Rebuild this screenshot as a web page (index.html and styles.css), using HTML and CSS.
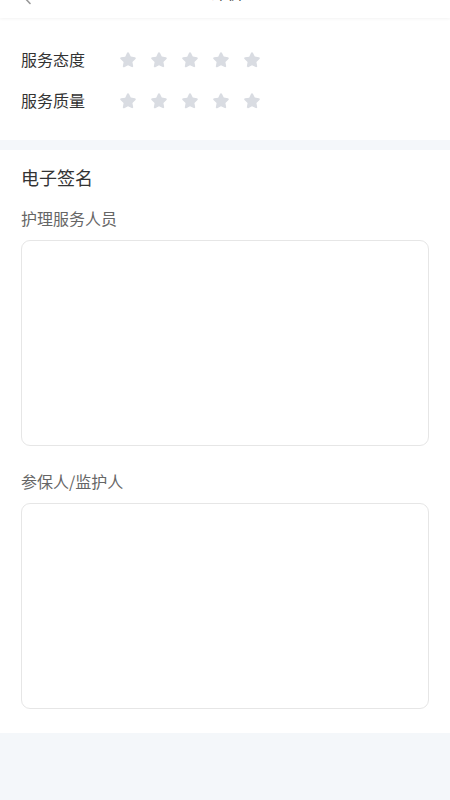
FILE: index.html
```html
<!DOCTYPE html>
<html lang="zh">
<head>
<meta charset="utf-8">
<title>评价</title>
<link rel="stylesheet" href="styles.css">
</head>
<body>
<div class="page">
  <header class="nav">
    <span class="back">
      <svg width="10" height="16" viewBox="0 0 10 16"><path d="M8 1.5 L2 8 L8 14.5" fill="none" stroke="#999" stroke-width="1.6" stroke-linecap="round" stroke-linejoin="round"/></svg>
    </span>
    <span class="title">评价</span>
  </header>

  <section class="card rate-card">
    <div class="rate-row">
      <span class="rate-label">服务态度</span>
      <div class="stars">
        <svg class="star" viewBox="0 0 24 24"><path d="M12 2.6c.5 0 .9.3 1.1.7l2.2 4.6 5 .7c1 .1 1.4 1.4.7 2.1l-3.7 3.6.9 5c.2 1-.9 1.7-1.7 1.2L12 18.2l-4.5 2.4c-.9.5-1.9-.3-1.7-1.2l.9-5-3.7-3.6c-.7-.7-.3-2 .7-2.1l5-.7 2.2-4.6c.2-.4.6-.7 1.1-.7z"/></svg>
        <svg class="star" viewBox="0 0 24 24"><path d="M12 2.6c.5 0 .9.3 1.1.7l2.2 4.6 5 .7c1 .1 1.4 1.4.7 2.1l-3.7 3.6.9 5c.2 1-.9 1.7-1.7 1.2L12 18.2l-4.5 2.4c-.9.5-1.9-.3-1.7-1.2l.9-5-3.7-3.6c-.7-.7-.3-2 .7-2.1l5-.7 2.2-4.6c.2-.4.6-.7 1.1-.7z"/></svg>
        <svg class="star" viewBox="0 0 24 24"><path d="M12 2.6c.5 0 .9.3 1.1.7l2.2 4.6 5 .7c1 .1 1.4 1.4.7 2.1l-3.7 3.6.9 5c.2 1-.9 1.7-1.7 1.2L12 18.2l-4.5 2.4c-.9.5-1.9-.3-1.7-1.2l.9-5-3.7-3.6c-.7-.7-.3-2 .7-2.1l5-.7 2.2-4.6c.2-.4.6-.7 1.1-.7z"/></svg>
        <svg class="star" viewBox="0 0 24 24"><path d="M12 2.6c.5 0 .9.3 1.1.7l2.2 4.6 5 .7c1 .1 1.4 1.4.7 2.1l-3.7 3.6.9 5c.2 1-.9 1.7-1.7 1.2L12 18.2l-4.5 2.4c-.9.5-1.9-.3-1.7-1.2l.9-5-3.7-3.6c-.7-.7-.3-2 .7-2.1l5-.7 2.2-4.6c.2-.4.6-.7 1.1-.7z"/></svg>
        <svg class="star" viewBox="0 0 24 24"><path d="M12 2.6c.5 0 .9.3 1.1.7l2.2 4.6 5 .7c1 .1 1.4 1.4.7 2.1l-3.7 3.6.9 5c.2 1-.9 1.7-1.7 1.2L12 18.2l-4.5 2.4c-.9.5-1.9-.3-1.7-1.2l.9-5-3.7-3.6c-.7-.7-.3-2 .7-2.1l5-.7 2.2-4.6c.2-.4.6-.7 1.1-.7z"/></svg>
      </div>
    </div>
    <div class="rate-row">
      <span class="rate-label">服务质量</span>
      <div class="stars">
        <svg class="star" viewBox="0 0 24 24"><path d="M12 2.6c.5 0 .9.3 1.1.7l2.2 4.6 5 .7c1 .1 1.4 1.4.7 2.1l-3.7 3.6.9 5c.2 1-.9 1.7-1.7 1.2L12 18.2l-4.5 2.4c-.9.5-1.9-.3-1.7-1.2l.9-5-3.7-3.6c-.7-.7-.3-2 .7-2.1l5-.7 2.2-4.6c.2-.4.6-.7 1.1-.7z"/></svg>
        <svg class="star" viewBox="0 0 24 24"><path d="M12 2.6c.5 0 .9.3 1.1.7l2.2 4.6 5 .7c1 .1 1.4 1.4.7 2.1l-3.7 3.6.9 5c.2 1-.9 1.7-1.7 1.2L12 18.2l-4.5 2.4c-.9.5-1.9-.3-1.7-1.2l.9-5-3.7-3.6c-.7-.7-.3-2 .7-2.1l5-.7 2.2-4.6c.2-.4.6-.7 1.1-.7z"/></svg>
        <svg class="star" viewBox="0 0 24 24"><path d="M12 2.6c.5 0 .9.3 1.1.7l2.2 4.6 5 .7c1 .1 1.4 1.4.7 2.1l-3.7 3.6.9 5c.2 1-.9 1.7-1.7 1.2L12 18.2l-4.5 2.4c-.9.5-1.9-.3-1.7-1.2l.9-5-3.7-3.6c-.7-.7-.3-2 .7-2.1l5-.7 2.2-4.6c.2-.4.6-.7 1.1-.7z"/></svg>
        <svg class="star" viewBox="0 0 24 24"><path d="M12 2.6c.5 0 .9.3 1.1.7l2.2 4.6 5 .7c1 .1 1.4 1.4.7 2.1l-3.7 3.6.9 5c.2 1-.9 1.7-1.7 1.2L12 18.2l-4.5 2.4c-.9.5-1.9-.3-1.7-1.2l.9-5-3.7-3.6c-.7-.7-.3-2 .7-2.1l5-.7 2.2-4.6c.2-.4.6-.7 1.1-.7z"/></svg>
        <svg class="star" viewBox="0 0 24 24"><path d="M12 2.6c.5 0 .9.3 1.1.7l2.2 4.6 5 .7c1 .1 1.4 1.4.7 2.1l-3.7 3.6.9 5c.2 1-.9 1.7-1.7 1.2L12 18.2l-4.5 2.4c-.9.5-1.9-.3-1.7-1.2l.9-5-3.7-3.6c-.7-.7-.3-2 .7-2.1l5-.7 2.2-4.6c.2-.4.6-.7 1.1-.7z"/></svg>
      </div>
    </div>
  </section>

  <section class="card sign-card">
    <h2 class="sign-title">电子签名</h2>
    <div class="sign-label">护理服务人员</div>
    <div class="sign-box"></div>
    <div class="sign-label second">参保人/监护人</div>
    <div class="sign-box"></div>
  </section>
</div>
</body>
</html>
```

FILE: styles.css
```css
* { box-sizing: border-box; }
html, body {
  margin: 0;
  padding: 0;
  background: #f4f7fa;
  font-family: "Noto Sans CJK SC", "Noto Sans", sans-serif;
  color: #333;
}
.page {
  min-height: 800px;
  background: #f4f7fa;
}
.nav {
  height: 46px;
  margin-top: -28px;
  padding-bottom: 7px;
  background: #fff;
  display: flex;
  align-items: center;
  justify-content: center;
  position: relative;
  box-shadow: 0 1px 3px rgba(0, 0, 0, 0.05);
  z-index: 1;
}
.back {
  position: absolute;
  left: 22px;
  top: 17px;
  display: flex;
}
.title {
  font-size: 17px;
  color: #222;
  margin-left: 4px;
}
.card {
  background: #fff;
}
.rate-card {
  padding: 20px 21px 20px;
  margin-bottom: 10px;
}
.rate-row {
  display: flex;
  align-items: center;
  height: 41px;
}
.rate-label {
  font-size: 16px;
  width: 64px;
  line-height: 22px;
  color: #333;
}
.stars {
  display: flex;
  gap: 11px;
  margin-left: 33px;
  margin-top: 3px;
}
.star {
  width: 20px;
  height: 20px;
  fill: #d9dce2;
}
.sign-card {
  padding: 15px 21px 24px;
}
.sign-title {
  margin: 0;
  font-size: 18px;
  font-weight: normal;
  line-height: 24px;
  color: #333;
}
.sign-label {
  font-size: 16px;
  line-height: 20px;
  color: #666;
  margin-top: 19px;
  margin-bottom: 12px;
}
.sign-label.second {
  margin-top: 25px;
}
.sign-box {
  height: 206px;
  border: 1px solid #e6e6e6;
  border-radius: 9px;
  background: #fff;
}
```
